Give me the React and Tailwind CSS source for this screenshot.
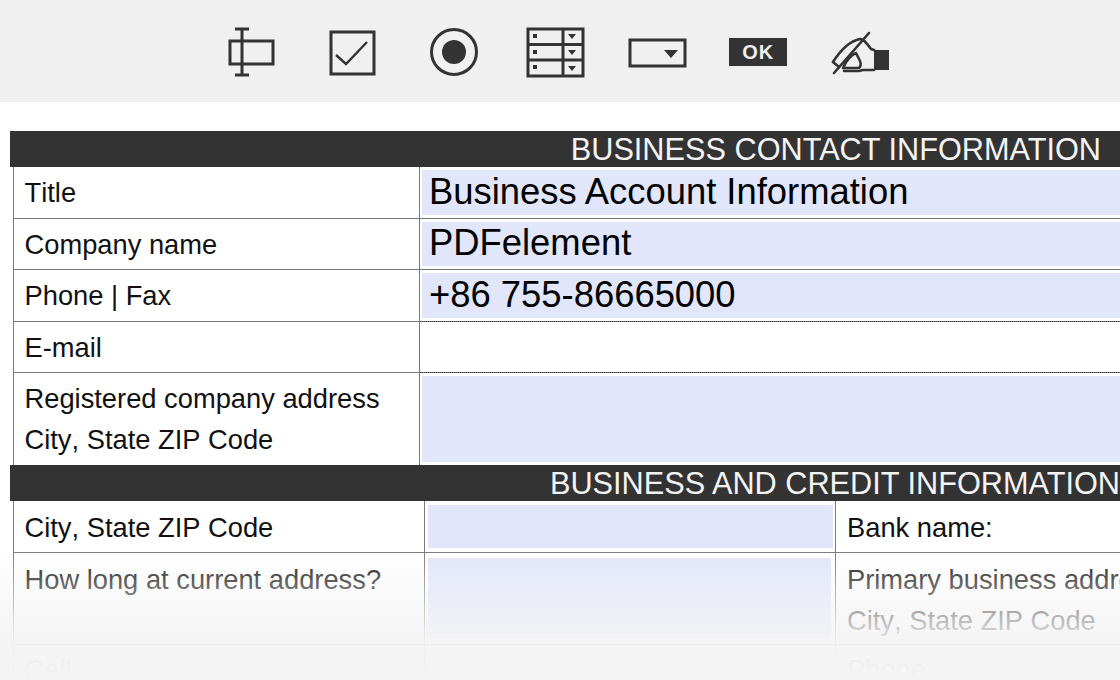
const FONT = "font-['Liberation_Sans',Arial,sans-serif]";

function Cell({ children }) {
  return <div className="flex items-center justify-center w-[101.5px]">{children}</div>;
}

function Toolbar() {
  return (
    <div className="flex items-center h-[102px] pl-[200px] bg-[#f0f0f0]">
      <Cell>
        <svg width="60" height="60" viewBox="0 0 60 60" fill="none" stroke="#333" strokeWidth="3">
          <rect x="9" y="20" width="43" height="23" />
          <path d="M21 8v46M14 8h14M14 54h14" />
        </svg>
      </Cell>
      <Cell>
        <svg width="60" height="60" viewBox="0 0 60 60" fill="none" stroke="#333">
          <rect x="9" y="11" width="43" height="42" strokeWidth="3" />
          <path d="M14 34l10 9 21-22" strokeWidth="2.4" />
        </svg>
      </Cell>
      <Cell>
        <svg width="60" height="60" viewBox="0 0 60 60">
          <circle cx="30" cy="31" r="22.5" fill="none" stroke="#333" strokeWidth="3" />
          <circle cx="30" cy="31" r="12" fill="#333" />
        </svg>
      </Cell>
      <Cell>
        <svg width="60" height="60" viewBox="0 0 60 60" fill="none" stroke="#333" strokeWidth="3">
          <rect x="3" y="8" width="55" height="47" />
          <path d="M3 23.5h55M3 39h55M38 8v47" />
          <g fill="#333" stroke="none">
            <rect x="8" y="13" width="4" height="4" />
            <rect x="8" y="29" width="4" height="4" />
            <rect x="8" y="44" width="4" height="4" />
            <path d="M43 13h8l-4 5zM43 29h8l-4 5zM43 45h8l-4 5z" />
          </g>
        </svg>
      </Cell>
      <Cell>
        <svg width="60" height="60" viewBox="0 0 60 60" fill="none">
          <rect x="3" y="19" width="55" height="26" stroke="#333" strokeWidth="3" />
          <path d="M37 29h14l-7 8z" fill="#333" />
        </svg>
      </Cell>
      <Cell>
        <div className="flex items-center justify-center w-[58px] h-[28px] mt-[2px] bg-[#333] text-[#eee] font-bold text-[20px] tracking-[1px]">
          OK
        </div>
      </Cell>
      <Cell>
        <svg width="60" height="60" viewBox="0 0 60 60" fill="none" stroke="#333" strokeWidth="2.6" strokeLinejoin="round" strokeLinecap="round">
          <path d="M39 12L4 52" />
          <path d="M3 41C10 30 20 20 30 18c3 0 5 2 11 10l3 1" />
          <path d="M3 41l6 5" />
          <path d="M44 49H33l-4 1H14" />
          <path d="M13 47h15c3 0 3-5 2-7l-4-8c-5 2-10 8-13 15z" />
          <rect x="44" y="29" width="15" height="20" fill="#333" stroke="none" />
        </svg>
      </Cell>
    </div>
  );
}

function SectionBar({ title, right }) {
  return (
    <div className="flex items-center justify-end h-[36px] pt-[2px] -ml-[4px] bg-[#333] text-[#f4f4f4] text-[30.7px] leading-none" style={{ paddingRight: right }}>
      {title}
    </div>
  );
}

function ContactRow({ label, value, height, empty, last }) {
  return (
    <div className={`grid grid-cols-[406px_1fr] ${last ? "" : "border-b border-[#7a7a7a]"}`} style={{ height }}>
      <div className="flex flex-col justify-center gap-[11px] pl-[10.5px] pt-[1px] text-[27.3px] leading-[30px] text-[#111] [font-kerning:none] border-r border-[#7a7a7a]">
        {label.map(line => <div key={line}>{line}</div>)}
      </div>
      {empty ? (
        <div className="-mt-[1px] -mb-[1px] border-y border-dotted border-[#333]" />
      ) : (
        <div className="py-[3px] pl-[2px] h-full">
          <div className="flex items-center h-full pl-[7px] pb-[1px] text-[36.4px] leading-none text-black bg-[#e1e6fb]">
            {value}
          </div>
        </div>
      )}
    </div>
  );
}

export default function App() {
  return (
    <div className={`relative w-[1120px] h-[680px] overflow-hidden bg-white ${FONT}`}>
      <Toolbar />

      <div className="w-[1300px] mt-[29px] ml-[13px] border-l border-[#7a7a7a]">
        <SectionBar title="BUSINESS CONTACT INFORMATION" right={212} />
        <ContactRow label={["Title"]} value="Business Account Information" height={52} />
        <ContactRow label={["Company name"]} value="PDFelement" height={51} />
        <ContactRow label={["Phone | Fax"]} value="+86 755-86665000" height={52} />
        <ContactRow label={["E-mail"]} height={51} empty />
        <ContactRow label={["Registered company address", "City, State ZIP Code"]} height={92} last />

        <SectionBar title="BUSINESS AND CREDIT INFORMATION" right={193} />

        <div className="grid grid-cols-[411px_411px_1fr] h-[52px] border-b border-[#7a7a7a] [font-kerning:none]">
          <div className="flex items-center pl-[10.5px] pt-[3px] text-[27.3px] text-[#111] border-r border-[#7a7a7a]">City, State ZIP Code</div>
          <div className="py-[4px] pl-[3px] pr-[2px] border-r border-[#7a7a7a]"><div className="h-full bg-[#e1e6fb]" /></div>
          <div className="flex items-center pl-[11px] pt-[3px] text-[27.3px] text-[#111]">Bank name:</div>
        </div>
        <div className="grid grid-cols-[411px_411px_1fr] h-[92px] border-b border-[#7a7a7a] [font-kerning:none]">
          <div className="pl-[10.5px] pt-[12px] text-[27.3px] leading-[30px] text-[#111] border-r border-[#7a7a7a]">How long at current address?</div>
          <div className="py-[5px] pl-[3px] pr-[4px] border-r border-[#7a7a7a]"><div className="h-full bg-[#e1e6fb]" /></div>
          <div className="pl-[11px] pt-[12px] text-[27.3px] leading-[30px] text-[#111]">
            <div>Primary business address</div>
            <div className="mt-[11px]">City, State ZIP Code</div>
          </div>
        </div>
        <div className="grid grid-cols-[411px_411px_1fr] h-[60px]">
          <div className="pl-[10.5px] pt-[10px] text-[27.3px] leading-[30px] text-[#111] border-r border-[#7a7a7a]">Cell</div>
          <div className="border-r border-[#7a7a7a]" />
          <div className="pl-[11px] pt-[10px] text-[27.3px] leading-[30px] text-[#111]">Phone</div>
        </div>
      </div>

      {/* fade at the bottom of the form */}
      <div className="absolute left-0 right-0 bottom-0 h-[130px] bg-[linear-gradient(to_bottom,rgba(244,244,244,0)_0%,rgba(244,244,244,0.7)_50%,rgba(244,244,244,0.95)_72%,rgba(244,244,244,1)_100%)]" />
    </div>
  );
}
